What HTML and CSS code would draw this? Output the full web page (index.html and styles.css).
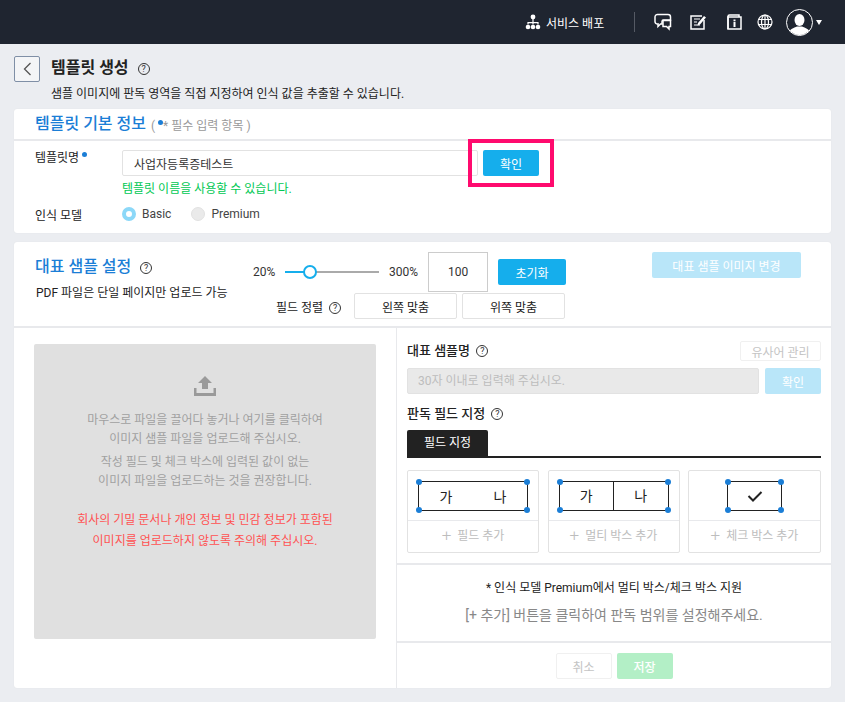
FILE: index.html
```html
<!DOCTYPE html>
<html>
<head>
  <meta charset="UTF-8">
  <title>템플릿 생성</title>
  <link rel="stylesheet" href="styles.css">
</head>
<body>
  <header class="topbar">
    <a class="deploy">
      <svg width="16" height="16" viewBox="0 0 16 16" fill="#fff"><circle cx="8" cy="3" r="2.4"/><path d="M7.4 5h1.2v3h5v2.5h-1.2V9.2H8.6v1.3H7.4V9.2H3.6v1.3H2.4V8h5z"/><circle cx="3" cy="13" r="2.3"/><circle cx="8" cy="13" r="2.3"/><circle cx="13" cy="13" r="2.3"/></svg>
      서비스 배포
    </a>
    <span class="topbar-sep"></span>
    <svg class="tool tool-chat" width="18" height="18" viewBox="0 0 18 18" fill="none" stroke="#fff" stroke-width="1.5"><path d="M4 1.5h10a2.5 2.5 0 0 1 2.5 2.5v3H9.500a1.500 1.500 0 0 0-1.500 1.500v2.500H6.500L4 13.500V11A2.500 2.500 0 0 1 1 8.500V4a2.500 2.500 0 0 1 3-2.500z"/><path d="M9 7.500h7.500v6h-1.500V16l-2.500-2.500H9z"/></svg>
    <svg class="tool tool-note" width="17" height="16" viewBox="0 0 17 16" fill="none" stroke="#fff" stroke-width="1.500"><path d="M12 2H1v13h13V6"/><path d="M4 5h6M4 8h3M4 11h6" stroke-width="1.200"/><path d="M8 9l6-7 2 1.500-6 7-2.500 1z" fill="#fff" stroke="none"/></svg>
    <svg class="tool tool-info" width="15" height="16" viewBox="0 0 15 16" fill="none" stroke="#fff" stroke-width="1.500"><path d="M1 15V2.500A1.500 1.500 0 0 1 2.500 1H12v2"/><rect x="1" y="3" width="13" height="12"/><rect x="6.500" y="5.500" width="2" height="1.800" fill="#fff" stroke="none"/><rect x="6.500" y="8" width="2" height="5" fill="#fff" stroke="none"/></svg>
    <svg class="tool tool-globe" width="16" height="16" viewBox="0 0 16 16" fill="none" stroke="#fff" stroke-width="1.200"><circle cx="8" cy="8" r="7"/><ellipse cx="8" cy="8" rx="3.500" ry="7"/><path d="M8 1v14M1.500 5.500h13M1.500 10.500h13"/></svg>
    <svg class="avatar" width="27" height="27" viewBox="0 0 27 27"><defs><clipPath id="avatarClip"><circle cx="13.500" cy="13.500" r="12.500"/></clipPath></defs><circle cx="13.500" cy="13.500" r="13" fill="#1f2530" stroke="#fff" stroke-width="1"/><g clip-path="url(#avatarClip)" fill="#fff"><ellipse cx="13.500" cy="11" rx="5" ry="6"/><path d="M2 27c0-7 6-8 9-9.500h5c3 1.500 9 2.500 9 9.500z"/></g></svg>
    <span class="caret"></span>
  </header>

  <div class="page">
    <div class="page-head">
      <button class="back-btn"><svg width="9" height="14" viewBox="0 0 9 14" fill="none" stroke="#555" stroke-width="1.300"><path d="M7.500 1L1.500 7l6 6"/></svg></button>
      <div>
        <h1 class="page-title">템플릿 생성 <span class="help help-lg">?</span></h1>
        <p class="page-desc">샘플 이미지에 판독 영역을 직접 지정하여 인식 값을 추출할 수 있습니다.</p>
      </div>
    </div>

    <section class="card card-basic">
      <div class="card-title-row">
        <h2 class="card-title">템플릿 기본 정보</h2>
        <span class="required-note">( <i class="dot"></i>* 필수 입력 항목 )</span>
      </div>
      <div class="form-row name-row">
        <label class="form-label">템플릿명 <i class="dot"></i></label>
        <input class="text-input name-input" type="text" value="사업자등록증테스트">
        <button class="btn btn-blue btn-confirm">확인</button>
        <span class="highlight"></span>
      </div>
      <p class="ok-msg">템플릿 이름을 사용할 수 있습니다.</p>
      <div class="form-row model-row">
        <label class="form-label">인식 모델</label>
        <span class="radio radio-on"></span><span class="radio-text">Basic</span>
        <span class="radio"></span><span class="radio-text">Premium</span>
      </div>
    </section>

    <section class="card card-sample">
      <div class="sample-top">
        <div class="sample-head">
          <h2 class="card-title">대표 샘플 설정 <span class="help help-lg">?</span></h2>
          <p class="pdf-note">PDF 파일은 단일 페이지만 업로드 가능</p>
        </div>
        <div class="zoom-tools">
          <div class="zoom-row">
            <span>20%</span>
            <span class="slider"><span class="slider-fill"></span><span class="slider-knob"></span></span>
            <span>300%</span>
            <input class="zoom-input" type="text" value="100">
            <button class="btn btn-blue btn-reset">초기화</button>
          </div>
          <div class="align-row">
            <span class="align-label">필드 정렬 <span class="help">?</span></span>
            <button class="btn btn-line btn-align-l">왼쪽 맞춤</button>
            <button class="btn btn-line btn-align-t">위쪽 맞춤</button>
          </div>
        </div>
        <button class="btn btn-blue-off btn-change">대표 샘플 이미지 변경</button>
      </div>

      <div class="sample-body">
        <div class="upload-col">
          <div class="upload-box">
            <svg class="upload-icon" width="22" height="20" viewBox="0 0 22 20" fill="#9a9a9a"><path d="M11 0l7 7h-4v6H8V7H4z"/><path d="M0 12h2.500v5h17v-5H22v8H0z"/></svg>
            <p class="upload-text">마우스로 파일을 끌어다 놓거나 여기를 클릭하여<br>이미지 샘플 파일을 업로드해 주십시오.</p>
            <p class="upload-text upload-sub">작성 필드 및 체크 박스에 입력된 값이 없는<br>이미지 파일을 업로드하는 것을 권장합니다.</p>
            <p class="upload-text upload-warn">회사의 기밀 문서나 개인 정보 및 민감 정보가 포함된<br>이미지를 업로드하지 않도록 주의해 주십시오.</p>
          </div>
        </div>

        <div class="field-col">
          <div class="field-setup">
            <div class="sample-name-head">
              <h3 class="sub-title">대표 샘플명 <span class="help">?</span></h3>
              <button class="btn btn-line-off btn-synonym">유사어 관리</button>
            </div>
            <div class="sample-name-row">
              <input class="text-input sample-input" type="text" placeholder="30자 이내로 입력해 주십시오." disabled>
              <button class="btn btn-blue-off btn-name-ok">확인</button>
            </div>
            <h3 class="sub-title field-title">판독 필드 지정 <span class="help">?</span></h3>
            <div class="tabs"><span class="tab">필드 지정</span></div>
            <div class="field-cards">
              <div class="field-card">
                <div class="field-demo">
                  <div class="demo-box demo-wide"><span>가</span><span>나</span><i class="hd tl"></i><i class="hd tr"></i><i class="hd bl"></i><i class="hd br"></i></div>
                </div>
                <div class="field-add"><b>+</b> 필드 추가</div>
              </div>
              <div class="field-card">
                <div class="field-demo">
                  <div class="demo-box demo-split"><span>가</span><span>나</span><i class="hd tl"></i><i class="hd tr"></i><i class="hd bl"></i><i class="hd br"></i></div>
                </div>
                <div class="field-add"><b>+</b> 멀티 박스 추가</div>
              </div>
              <div class="field-card">
                <div class="field-demo">
                  <div class="demo-box demo-check"><svg width="16" height="12" viewBox="0 0 16 12" fill="none" stroke="#222" stroke-width="2"><path d="M1.500 6l4.500 4.500L14.500 2"/></svg><i class="hd tl"></i><i class="hd tr"></i><i class="hd bl"></i><i class="hd br"></i></div>
                </div>
                <div class="field-add"><b>+</b> 체크 박스 추가</div>
              </div>
            </div>
          </div>
          <div class="field-hint">
            <p class="hint-note">* 인식 모델 Premium에서 멀티 박스/체크 박스 지원</p>
            <p class="hint-main">[+ 추가] 버튼을 클릭하여 판독 범위를 설정해주세요.</p>
          </div>
          <div class="field-actions">
            <button class="btn btn-line-off btn-cancel">취소</button>
            <button class="btn btn-save">저장</button>
          </div>
        </div>
      </div>
    </section>
  </div>
</body>
</html>
```

FILE: styles.css
```css
* {
  box-sizing: border-box;
}

html, body {
  margin: 0;
  height: 702px;
  overflow: hidden;
}

body {
  background: #ebedf1;
  color: #222;
  font-family: Roboto, "Noto Sans CJK KR", sans-serif;
  font-size: 12px;
}

h1, h2, h3, p {
  margin: 0;
}

button, input {
  font-family: inherit;
}

/* top bar */
.topbar {
  height: 44px;
  background: #1f2530;
  display: flex;
  align-items: center;
  padding-left: 525px;
}

.deploy {
  display: flex;
  align-items: center;
  gap: 5px;
  color: #fff;
  font-size: 12px;
  width: 82px;
}

.deploy svg {
  flex: none;
}

.topbar-sep {
  width: 1px;
  height: 20px;
  background: #555a64;
  margin: 0 19px 0 27px;
}

.tool-note { margin-left: 18px; }
.tool-info { margin-left: 20px; }
.tool-globe { margin-left: 15px; }
.avatar { margin-left: 13px; }

.caret {
  margin-left: 3px;
  border: 3.5px solid transparent;
  border-top: 5px solid #fff;
  border-bottom: 0;
}

/* page */
.page {
  padding: 12px 14px 0;
}

.page-head {
  display: flex;
  gap: 11px;
  height: 53px;
}

.back-btn {
  width: 26px;
  height: 26px;
  border: 1px solid #7f8fa6;
  border-radius: 2px;
  background: #f4f5f7;
  padding: 0;
  display: flex;
  align-items: center;
  justify-content: center;
}

.page-title {
  font-size: 16px;
  font-weight: 700;
  line-height: 24px;
  color: #222;
}

.page-desc {
  font-size: 12px;
  line-height: 18px;
  margin-top: 5px;
  color: #222;
}

.help {
  display: inline-block;
  width: 12px;
  height: 12px;
  border: 1px solid #333;
  border-radius: 50%;
  font-size: 9px;
  font-weight: 400;
  line-height: 10px;
  text-align: center;
  color: #333;
  vertical-align: 1px;
  margin-left: 3px;
}

.help-lg {
  margin-left: 5px;
}

.card {
  background: #fff;
  border-radius: 3px;
  box-shadow: 0 0 1px #d8dade;
}

.dot {
  display: inline-block;
  width: 5px;
  height: 5px;
  border-radius: 50%;
  background: #1b7ed6;
  vertical-align: 5px;
}

/* basic info */
.card-basic {
  height: 124px;
}

.card-title-row {
  height: 32px;
  padding: 0 21px;
  border-bottom: 2px solid #e8e9ec;
  display: flex;
  align-items: center;
  gap: 5px;
}

.card-title {
  font-size: 16px;
  font-weight: 500;
  color: #1b7ed6;
  line-height: 28px;
}

.required-note {
  color: #999;
  font-size: 12px;
}

.form-row {
  display: flex;
  align-items: center;
  padding-left: 21px;
  position: relative;
}

.form-label {
  width: 87px;
  color: #222;
}

.name-row {
  height: 26px;
  margin-top: 9px;
}

.name-row .form-label {
  align-self: flex-start;
  line-height: 16px;
}

.text-input {
  height: 26px;
  border: 1px solid #e2e2e2;
  border-radius: 2px;
  padding: 0 11px;
  font-size: 12px;
  color: #333;
  outline: none;
}

.name-input {
  width: 356px;
}

.btn {
  border: 0;
  border-radius: 2px;
  font-size: 12px;
  padding: 0;
  height: 26px;
}

.btn-blue {
  background: #15aeec;
  color: #fff;
}

.btn-blue-off {
  background: #b9e6f9;
  color: #fff;
}

.btn-line {
  background: #fff;
  border: 1px solid #e2e2e2;
  color: #222;
}

.btn-line-off {
  background: #fff;
  border: 1px solid #f0f0f0;
  color: #c4c4c4;
}

.btn-confirm {
  width: 56px;
  margin-left: 5px;
}

.highlight {
  position: absolute;
  left: 454px;
  top: -11px;
  width: 86px;
  height: 48px;
  border: 4px solid #ff0a6e;
}

.ok-msg {
  color: #00c853;
  font-size: 12px;
  line-height: 18px;
  margin: 4px 0 0 108px;
}

.model-row {
  height: 18px;
  margin-top: 7px;
}

.radio {
  width: 14px;
  height: 14px;
  border-radius: 50%;
  background: #eaeaea;
  border: 1px solid #e2e2e2;
  margin-right: 6px;
}

.radio-on {
  background: #fff;
  border: 4px solid #8cd8f8;
}

.radio-text {
  color: #444;
  margin-right: 20px;
}

/* sample card */
.card-sample {
  margin-top: 9px;
  height: 446px;
}

.sample-top {
  height: 86px;
  border-bottom: 2px solid #e8e9ec;
  display: flex;
  position: relative;
}

.sample-head {
  width: 239px;
  padding: 11px 0 0 21px;
}

.pdf-note {
  line-height: 18px;
  margin-top: 3px;
  padding-left: 1px;
  white-space: nowrap;
}

.zoom-tools {
  width: 313px;
  padding-top: 10px;
}

.zoom-row {
  display: flex;
  align-items: center;
  height: 40px;
  color: #333;
}

.slider {
  width: 94px;
  height: 2px;
  background: #aaa;
  margin: 0 10px;
  position: relative;
}

.slider-fill {
  position: absolute;
  left: 0;
  top: 0;
  width: 25px;
  height: 2px;
  background: #15aeec;
}

.slider-knob {
  position: absolute;
  left: 18px;
  top: -6px;
  width: 14px;
  height: 14px;
  border: 2px solid #15aeec;
  border-radius: 50%;
  background: #fff;
}

.zoom-input {
  width: 60px;
  height: 40px;
  margin-left: 10px;
  border: 1px solid #ccc;
  text-align: center;
  font-size: 12px;
  color: #333;
  outline: none;
}

.btn-reset {
  width: 68px;
  margin-left: 10px;
}

.align-row {
  display: flex;
  align-items: center;
  height: 26px;
  margin-top: 1px;
}

.align-label {
  margin-left: 23px;
  width: 78px;
}

.btn-align-l {
  width: 103px;
}

.btn-align-t {
  width: 103px;
  margin-left: 5px;
}

.btn-change {
  position: absolute;
  left: 638px;
  top: 10px;
  width: 149px;
}

.sample-body {
  display: flex;
  height: 360px;
}

.upload-col {
  width: 383px;
  padding: 16px 20px 0;
  border-right: 1px solid #e8e9ec;
}

.upload-box {
  width: 342px;
  height: 295px;
  background: #e0e0e0;
  border-radius: 2px;
  padding-top: 32px;
  text-align: center;
}

.upload-icon {
  display: block;
  margin: 0 auto 15px;
}

.upload-text {
  color: #a0a0a0;
  font-size: 12px;
  line-height: 19px;
}

.upload-sub {
  margin-top: 4px;
}

.upload-warn {
  color: #ff5252;
  margin-top: 19px;
  line-height: 21px;
}

.field-col {
  width: 434px;
}

.field-setup {
  height: 237px;
  padding: 13px 10px 0 10px;
  border-bottom: 2px solid #e8e9ec;
}

.sample-name-head {
  display: flex;
  justify-content: space-between;
  align-items: center;
  height: 20px;
}

.sub-title {
  font-size: 13px;
  font-weight: 500;
  line-height: 20px;
  color: #222;
}

.btn-synonym {
  width: 81px;
  height: 20px;
  font-size: 12px;
}

.sample-name-row {
  display: flex;
  gap: 6px;
  margin-top: 7px;
}

.sample-input {
  width: 352px;
  background: #e9e9e9;
  padding: 0 10px;
}

.sample-input::placeholder {
  color: #bdbdbd;
}

.btn-name-ok {
  width: 56px;
}

.field-title {
  margin-top: 10px;
}

.tabs {
  margin-top: 6px;
  height: 28px;
  border-bottom: 2px solid #222;
}

.tab {
  display: block;
  width: 81px;
  height: 28px;
  background: #222;
  color: #fff;
  text-align: center;
  line-height: 26px;
  border-radius: 2px 2px 0 0;
}

.field-cards {
  display: flex;
  justify-content: space-between;
  margin-top: 12px;
}

.field-card {
  width: 132px;
  height: 83px;
  border: 1px solid #e2e2e2;
  border-radius: 2px;
}

.field-card:last-child {
  width: 133px;
}

.field-demo {
  height: 50px;
  border-bottom: 1px solid #e8e9ec;
  display: flex;
  justify-content: center;
  padding-top: 10px;
}

.demo-box {
  height: 30px;
  border: 1px solid #222;
  position: relative;
  font-size: 14px;
  display: flex;
  align-items: center;
}

.demo-wide {
  width: 110px;
  justify-content: space-around;
}

.demo-split {
  width: 110px;
}

.demo-split span {
  flex: 1;
  text-align: center;
  line-height: 28px;
}

.demo-split span + span {
  border-left: 1px solid #222;
}

.demo-check {
  width: 55px;
  justify-content: center;
}

.hd {
  position: absolute;
  width: 6px;
  height: 6px;
  border-radius: 50%;
  background: #1b7ed6;
}

.tl { left: -3px; top: -3px; }
.tr { right: -3px; top: -3px; }
.bl { left: -3px; bottom: -3px; }
.br { right: -3px; bottom: -3px; }

.field-add {
  height: 31px;
  color: #bdbdbd;
  text-align: center;
  line-height: 29px;
  font-size: 12px;
}

.field-add b {
  font-size: 17px;
  font-weight: 300;
  vertical-align: -1px;
  margin-right: 3px;
}

.field-hint {
  height: 78px;
  border-bottom: 2px solid #e8e9ec;
  text-align: center;
  padding-top: 14px;
}

.hint-note {
  font-size: 12px;
  line-height: 18px;
  color: #222;
}

.hint-main {
  font-size: 14px;
  line-height: 20px;
  color: #888;
  margin-top: 8px;
}

.field-actions {
  display: flex;
  justify-content: center;
  gap: 5px;
  padding-top: 10px;
  padding-left: 0;
}

.btn-cancel, .btn-save {
  width: 56px;
}

.btn-save {
  background: #b3efc6;
  color: #fff;
  font-weight: 500;
}
```
